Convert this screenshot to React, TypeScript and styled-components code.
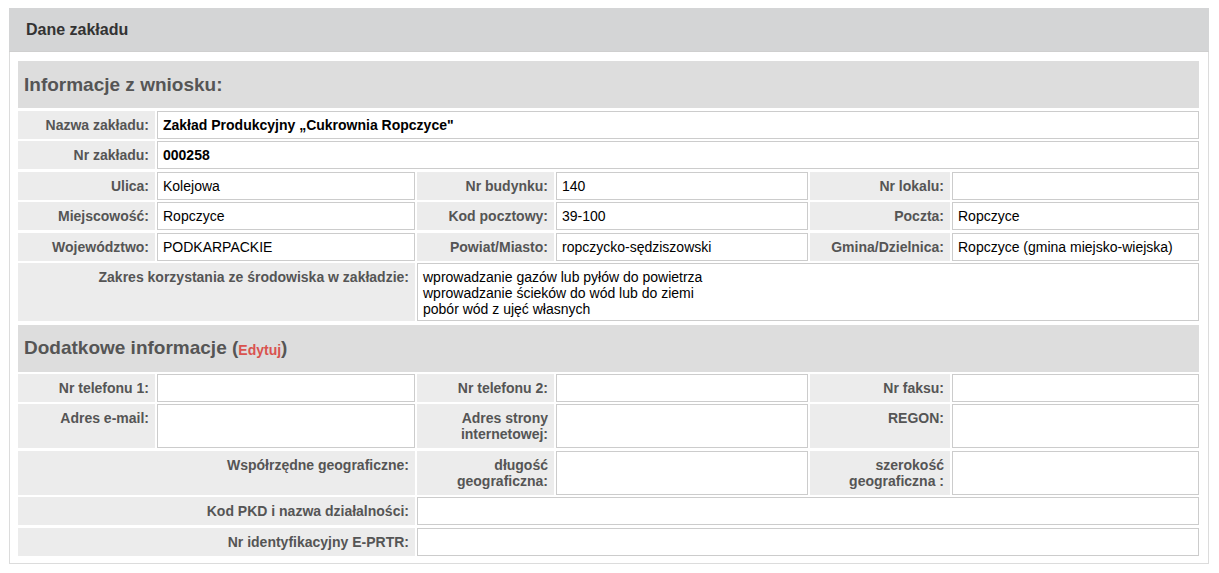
import React from "react";
import styled, { createGlobalStyle } from "styled-components";

const GlobalStyle = createGlobalStyle`
  html, body { margin: 0; padding: 0; background: #fff; }
  body { font-family: "Liberation Sans", Arial, sans-serif; font-size: 14px; color: #000; }
`;

const Page = styled.div`
  padding: 8px 0 0 9px;
`;

const Panel = styled.section`
  width: 1200px;
  box-sizing: border-box;
  border: 1px solid #dcdcdc;
  border-top: none;
`;

const PanelHeader = styled.header`
  height: 44px;
  margin: 0 -1px;
  background: #d4d5d6;
  border-bottom: 1px solid #cfcfcf;
  box-sizing: border-box;
  display: flex;
  align-items: center;
  padding-left: 17px;
  font-size: 16px;
  font-weight: bold;
  color: #333;
`;

const PanelBody = styled.div`
  padding: 9px 9px 7px 8px;
`;

const SectionTitle = styled.h2<{ $first?: boolean }>`
  margin: ${(p) => (p.$first ? "0" : "4px")} 0 ${(p) => (p.$first ? "3px" : "2px")};
  height: 47px;
  box-sizing: border-box;
  background: #dddddd;
  display: flex;
  align-items: center;
  padding-left: 6px;
  font-size: 19px;
  font-weight: bold;
  color: #555;
`;

const EditLink = styled.a`
  color: #d9534f;
  font-size: 14px;
  text-decoration: none;
  cursor: pointer;
  align-self: center;
  margin-top: 3px;
`;

const Grid = styled.div`
  display: grid;
  grid-template-columns: 137px 258px 137px 252px 140px 247px;
  column-gap: 2px;
  row-gap: 2.4px;
`;

const Label = styled.div<{ $span?: number }>`
  grid-column: span ${(p) => p.$span ?? 1};
  background: #ececec;
  padding: 6px 6px;
  text-align: right;
  font-weight: bold;
  color: #555;
  line-height: 16px;
  font-size: 14px;
`;

const Value = styled.div<{ $span?: number; $bold?: boolean; $multi?: boolean }>`
  grid-column: span ${(p) => p.$span ?? 1};
  border: 1px solid #cccccc;
  background: #fff;
  padding: ${(p) => (p.$multi ? "5px 5px 3px" : "5px")};
  line-height: 16px;
  font-size: 14px;
  color: #000;
  font-weight: ${(p) => (p.$bold ? "bold" : "normal")};
  min-height: 16px;
`;

export default function App() {
  return (
    <Page>
      <GlobalStyle />
      <Panel>
        <PanelHeader>Dane zakładu</PanelHeader>
        <PanelBody>
          <SectionTitle $first>Informacje z wniosku:</SectionTitle>
          <Grid>
            <Label>Nazwa zakładu:</Label>
            <Value $span={5} $bold>Zakład Produkcyjny „Cukrownia Ropczyce"</Value>

            <Label>Nr zakładu:</Label>
            <Value $span={5} $bold>000258</Value>

            <Label>Ulica:</Label>
            <Value>Kolejowa</Value>
            <Label>Nr budynku:</Label>
            <Value>140</Value>
            <Label>Nr lokalu:</Label>
            <Value />

            <Label>Miejscowość:</Label>
            <Value>Ropczyce</Value>
            <Label>Kod pocztowy:</Label>
            <Value>39-100</Value>
            <Label>Poczta:</Label>
            <Value>Ropczyce</Value>

            <Label>Województwo:</Label>
            <Value>PODKARPACKIE</Value>
            <Label>Powiat/Miasto:</Label>
            <Value>ropczycko-sędziszowski</Value>
            <Label>Gmina/Dzielnica:</Label>
            <Value>Ropczyce (gmina miejsko-wiejska)</Value>

            <Label $span={2}>Zakres korzystania ze środowiska w zakładzie:</Label>
            <Value $span={4} $multi>
              wprowadzanie gazów lub pyłów do powietrza
              <br />
              wprowadzanie ścieków do wód lub do ziemi
              <br />
              pobór wód z ujęć własnych
            </Value>
          </Grid>

          <SectionTitle>
            Dodatkowe informacje (<EditLink>Edytuj</EditLink>)
          </SectionTitle>
          <Grid>
            <Label>Nr telefonu 1:</Label>
            <Value />
            <Label>Nr telefonu 2:</Label>
            <Value />
            <Label>Nr faksu:</Label>
            <Value />

            <Label>Adres e-mail:</Label>
            <Value />
            <Label>Adres strony internetowej:</Label>
            <Value />
            <Label>REGON:</Label>
            <Value />

            <Label $span={2}>Współrzędne geograficzne:</Label>
            <Label>długość geograficzna:</Label>
            <Value />
            <Label>szerokość geograficzna :</Label>
            <Value />

            <Label $span={2}>Kod PKD i nazwa działalności:</Label>
            <Value $span={4} />

            <Label $span={2}>Nr identyfikacyjny E-PRTR:</Label>
            <Value $span={4} />
          </Grid>
        </PanelBody>
      </Panel>
    </Page>
  );
}
